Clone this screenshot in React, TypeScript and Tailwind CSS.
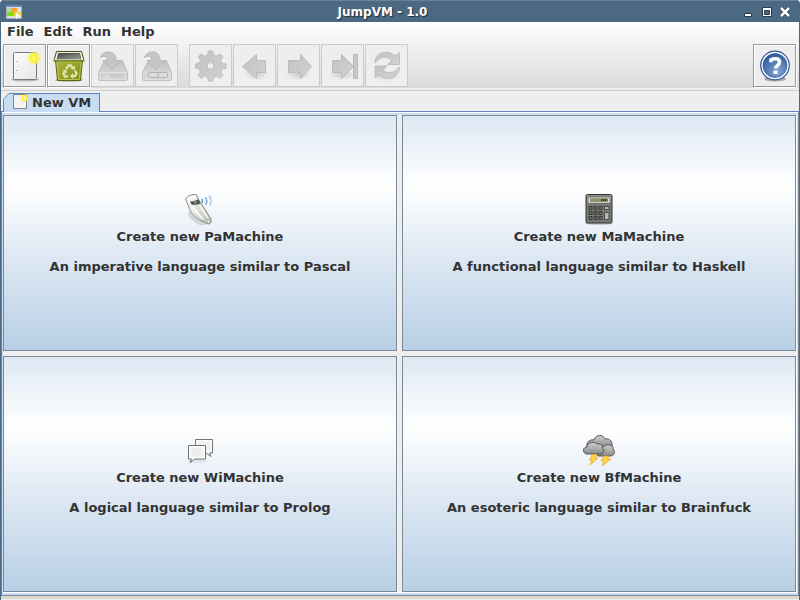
import React from "react";

type IconProps = { children: React.ReactNode; size?: string };

function Art({ children, size = "size-8" }: IconProps) {
  return (
    <svg viewBox="0 0 32 32" className={`${size} block shrink-0`} aria-hidden="true">
      {children}
    </svg>
  );
}

const NewIcon = () => (
  <Art>
    <defs>
      <linearGradient id="page" x1="0" y1="0" x2="1" y2="1">
        <stop offset="0" stopColor="#fdfdfd" />
        <stop offset="1" stopColor="#e6e6e6" />
      </linearGradient>
      <radialGradient id="glow">
        <stop offset="0" stopColor="#fffbb0" />
        <stop offset="0.4" stopColor="#fff12a" />
        <stop offset="0.75" stopColor="#fbf043" stopOpacity="0.75" />
        <stop offset="1" stopColor="#fff27a" stopOpacity="0" />
      </radialGradient>
    </defs>
    <ellipse cx="16" cy="29.500" rx="14" ry="2" fill="#000" opacity="0.22" />
    <rect x="4.500" y="2.500" width="23" height="27" rx="1" fill="url(#page)" stroke="#777" />
    <path d="M9.500 4v24" stroke="#ededed" />
    <path d="M7 11.500h1.500M7 20.500h1.500" stroke="#aaa" />
    <circle cx="25" cy="8" r="7" fill="url(#glow)" />
  </Art>
);

const TrashIcon = () => (
  <Art>
    <defs>
      <linearGradient id="bin" x1="0" y1="0" x2="1" y2="1">
        <stop offset="0" stopColor="#acb63c" />
        <stop offset="1" stopColor="#7e8f12" />
      </linearGradient>
      <linearGradient id="hole" x1="0" y1="0" x2="1" y2="1">
        <stop offset="0" stopColor="#4a4d49" />
        <stop offset="1" stopColor="#9a9d97" />
      </linearGradient>
    </defs>
    <ellipse cx="16" cy="30" rx="14" ry="1.800" fill="#000" opacity="0.25" />
    <path d="M2.500 10h27l-2 20.500h-23z" fill="url(#bin)" stroke="#58680d" />
    <path d="M4 12h24l-1.700 17.500h-20.600z" fill="none" stroke="#c5ce62" strokeWidth="0.800" />
    <path d="M3.500 1.500h25l2.500 9h-3l-1.500-7h-21l-1.500 7h-3z" fill="#f0f2e7" stroke="#404d16" />
    <path d="M5.500 3.500h21l1.500 6h-24z" fill="url(#hole)" />
    <path d="M1 10h30" stroke="#e3ead0" />
    <path d="M.5 11h31" stroke="#58680d" />
    <g fill="none" stroke="#dde4a8" strokeWidth="2.400">
      <path d="M13 19l2.500-3.500h2.500l1.500 2.500" />
      <path d="M22 20.500l1.500 3-1.500 2.500h-2.500" />
      <path d="M15 26.500h-3l-1.500-2.500 1-2" />
    </g>
    <g fill="#dde4a8">
      <path d="M22 15.500v4.500l-4.500-1z" />
      <path d="M20 23v6l-3-3z" />
      <path d="M9 20.500l4.500-1 .5 4z" />
    </g>
  </Art>
);

function SaveIcon({ as = false }: { as?: boolean }) {
  return (
    <Art>
      <defs>
        <linearGradient id="drive" x1="0" y1="0" x2="0" y2="1">
          <stop offset="0" stopColor="#c2c2c2" />
          <stop offset="1" stopColor="#dedede" />
        </linearGradient>
      </defs>
      <path d="M7.500 10.500h18l5 12v6.500q0 1.500-1.500 1.500H3q-1.500 0-1.500-1.500v-6.500z" fill="url(#drive)" stroke="#c0c0c0" />
      <path d="M2 22.500h28" stroke="#e0e0e0" />
      {as ? (
        <>
          <rect x="7.500" y="22.500" width="19" height="5" rx="1" fill="#dcdcdc" stroke="#b0b0b0" />
          <path d="M17 23.500v3" stroke="#a5a5a5" />
        </>
      ) : (
        <path d="M5 24v4M14 24v4M16 24v4M18 24v4M20 24v4M22 24v4M24 24v4M26 24v4" stroke="#c0c0c0" />
      )}
      <path d="M3.500 7.500C5 3 9 1.500 12.500 2c4.500.7 6.500 4 6.500 8.500h5l-9 9-9-9h4.500c0-4-3-5.500-7-3z" fill="#c6c6c6" stroke="#b6b6b6" />
    </Art>
  );
}

function GrayDefs() {
  return (
    <defs>
      <linearGradient id="gray" x1="0" y1="0" x2="1" y2="1">
        <stop offset="0" stopColor="#c2c2c2" />
        <stop offset="1" stopColor="#d2d2d2" />
      </linearGradient>
      <radialGradient id="shade">
        <stop offset="0" stopColor="#000" stopOpacity="0.14" />
        <stop offset="1" stopColor="#000" stopOpacity="0" />
      </radialGradient>
    </defs>
  );
}

const GearIcon = () => (
  <Art>
    <GrayDefs />
    <path
      fillRule="evenodd"
      d="M13.500 1h4l1 4 3 1.200 3.500-2.200 2.800 2.800-2.200 3.500 1.200 3 4.200.7v4l-4.200 1-1.200 3 2.200 3.500-2.800 2.800-3.500-2.200-3 1.200-1 3.700h-4l-1-3.700-3-1.200-3.500 2.200-2.800-2.800 2.200-3.500-1.200-3-3.700-1v-4l3.700-.7 1.200-3-2.200-3.500 2.800-2.800 3.500 2.200 3-1.200zM15.500 12.500a3.500 3.500 0 1 0 0 7 3.500 3.500 0 1 0 0-7z"
      fill="url(#gray)"
      stroke="#bcbcbc"
    />
  </Art>
);

const BackIcon = () => (
  <Art>
    <ellipse cx="17" cy="24" rx="13" ry="6" fill="url(#shade)" />
    <path d="M3.500 16.500L17.500 4.500v6h9v12h-9v6z" fill="url(#gray)" stroke="#bababa" />
  </Art>
);

const ForwardIcon = () => (
  <Art>
    <ellipse cx="15" cy="24" rx="13" ry="6" fill="url(#shade)" />
    <path d="M28.500 16.500L17.500 4.500v6h-12v12h12v6z" fill="url(#gray)" stroke="#bababa" />
  </Art>
);

const EndIcon = () => (
  <Art>
    <ellipse cx="15" cy="24" rx="13" ry="6" fill="url(#shade)" />
    <path d="M26.500 16.500L14.500 4.500v6h-9v12h9v6z" fill="url(#gray)" stroke="#bababa" />
    <path d="M26.500 4.500h4v24h-4z" fill="#c8c8c8" stroke="#b8b8b8" />
  </Art>
);

const RefreshIcon = () => (
  <Art>
    <ellipse cx="16" cy="26" rx="14" ry="5" fill="url(#shade)" />
    <path d="M4 13C3 4 16-2 24 6l4.500-3.500v12h-12l4-4C15 5 9 7 4 13z" fill="url(#gray)" stroke="#bfbfbf" />
    <path d="M28.500 17c0 10-13 15-20.500 8l-4 3V16h12l-4 4c5 5 11 3 16.500-3z" fill="url(#gray)" stroke="#bfbfbf" />
  </Art>
);

const HelpIcon = () => (
  <Art>
    <defs>
      <radialGradient id="help" cx="0.6" cy="0.75" r="0.7">
        <stop offset="0" stopColor="#83a7d4" />
        <stop offset="1" stopColor="#345f9e" />
      </radialGradient>
    </defs>
    <ellipse cx="16" cy="29" rx="11" ry="2.500" fill="#000" opacity="0.3" />
    <circle cx="16" cy="15.500" r="14.300" fill="#fff" stroke="#2f5796" strokeWidth="1.200" />
    <circle cx="16" cy="15.500" r="12" fill="url(#help)" stroke="#2f5796" strokeWidth="0.700" />
    <path d="M12 12.300V9.800C15 8 20.500 8.200 20.500 12c0 3.500-4 3.500-4 6.500" fill="none" stroke="#fff" strokeWidth="3.600" />
    <path d="M14.500 20.500h4v3.500h-4z" fill="#fff" />
  </Art>
);

const PhoneIcon = () => (
  <Art>
    <defs>
      <linearGradient id="phone" x1="0" y1="0" x2="1" y2="0.300">
        <stop offset="0" stopColor="#fff" />
        <stop offset="0.5" stopColor="#e6e6e2" />
        <stop offset="1" stopColor="#c2c3bd" />
      </linearGradient>
    </defs>
    <ellipse cx="13" cy="26" rx="11" ry="4" fill="#000" opacity="0.12" transform="rotate(35 13 26)" />
    <path d="M1.500 6C3 3 8 1 12.500 1.500l2 5L26.500 25c1.500 3 .5 6-2 6L20 29C14 27 8 22 6 17z" fill="url(#phone)" stroke="#8b8c85" />
    <path d="M4 7c3-2 5-3 8-3M8 14l11 12" fill="none" stroke="#fff" strokeWidth="1.500" />
    <path d="M16 13l8 12" stroke="#fafaf8" strokeWidth="1.500" />
    <circle cx="24.500" cy="28.500" r="1.300" fill="#fff" stroke="#999" strokeWidth="0.600" />
    <path d="M6.500 8.500c3 .5 5-.5 8-2l1.500 4c-3 1-6 1.500-8.500.5z" fill="#485046" stroke="#4b514a" strokeWidth="0.500" />
    <path d="M10 10l3-1" stroke="#8fa87c" strokeWidth="1.500" />
    <g fill="none" strokeWidth="1.500">
      <path d="M18 6q1 2 0 4" stroke="#5d92cb" />
      <path d="M21.500 4.500q2.500 3.500 0 7" stroke="#78a7d8" />
      <path d="M25 2.500q4 5 .5 10" stroke="#a7c9e8" />
    </g>
  </Art>
);

const CalculatorIcon = () => (
  <Art>
    <ellipse cx="16" cy="30.500" rx="14" ry="1.500" fill="#000" opacity="0.2" />
    <rect x="3" y="1.500" width="26" height="28.500" rx="1.500" fill="#777975" stroke="#30322f" />
    <path d="M4.500 10V3h23v7" fill="none" stroke="#aaa" />
    <rect x="5" y="4" width="22" height="6.500" rx="1.500" fill="#dcddd5" stroke="#444" strokeWidth="0.600" />
    <rect x="7" y="5.200" width="18" height="4" fill="#8b956b" />
    <path d="M18 7h6" stroke="#333b28" strokeDasharray="1.500 .5" strokeWidth="2" />
    {[13, 18, 23].map((y) =>
      [5.5, 10.5, 15.5].map((x) => (
        <g key={`${x}-${y}`}>
          <rect x={x} y={y} width="4" height="4" rx="1" fill="#383a37" />
          <path d={`M${x + 1} ${y + 2}h2`} stroke="#aaa" />
        </g>
      )),
    )}
    <rect x="21.500" y="13.500" width="4.500" height="3" fill="#b8b9b5" stroke="#4a4a4a" />
    <rect x="21.500" y="19.500" width="4.500" height="7" fill="#b8b9b5" stroke="#4a4a4a" />
  </Art>
);

const ChatIcon = () => (
  <Art>
    <ellipse cx="14" cy="27" rx="10" ry="2" fill="#000" opacity="0.06" />
    <path d="M11.500 5.500h17v13.500h-3l1.500 3.500-5-3.500h-10.500z" fill="#f0f0f0" stroke="#777" />
    <path d="M13 7h14v10H13z" fill="#eee" stroke="#fff" />
    <path d="M4.500 11.500h17v13.500H11l-5 3.500 1.500-3.500h-3z" fill="#f5f5f5" stroke="#707070" />
    <path d="M6 13h14v10.500H6z" fill="#eee" stroke="#fff" />
  </Art>
);

const StormIcon = () => (
  <Art>
    <defs>
      <linearGradient id="cloud" x1="0" y1="0" x2="0" y2="1">
        <stop offset="0" stopColor="#cfcfcf" />
        <stop offset="1" stopColor="#8a8a8a" />
      </linearGradient>
    </defs>
    <g fill="url(#cloud)" stroke="#4b4b4b" strokeWidth="0.900">
      <path d="M4 13c-1-5 3-8 7-7 2-6 9-6 11-1 5-1 8 3 7 8z" />
      <path d="M15 22c-2-5 1-9 5-9 4-4 11-2 10 2 3 3 1 7-3 7z" />
      <path d="M3 20C-1 18 0 13 4 13c0-5 8-6 10-3 4-1 7 2 5 4 3 1 2 6-1 6z" />
    </g>
    <g fill="#ffd641" stroke="#e7a12b" strokeWidth="0.700">
      <path d="M9 20.500h5l-1.500 3.500H15l-8 7 2-5H6.500z" />
      <path d="M21 22h5l-1.500 3H28l-9 7 2-5h-3z" />
    </g>
  </Art>
);

type ToolProps = { label: string; enabled?: boolean; children: React.ReactNode };

function Tool({ label, enabled = false, children }: ToolProps) {
  return (
    <button
      type="button"
      aria-label={label}
      disabled={!enabled}
      className={`flex size-[43px] items-center justify-center border bg-[#eee] ${
        enabled ? "border-[#999] shadow-[1px_1px_0_#fff,inset_1px_1px_0_#fff]" : "border-[#ccc]"
      }`}
    >
      {children}
    </button>
  );
}

const machines = [
  { title: "Create new PaMachine", text: "An imperative language similar to Pascal", icon: <PhoneIcon /> },
  { title: "Create new MaMachine", text: "A functional language similar to Haskell", icon: <CalculatorIcon /> },
  { title: "Create new WiMachine", text: "A logical language similar to Prolog", icon: <ChatIcon /> },
  { title: "Create new BfMachine", text: "An esoteric language similar to Brainfuck", icon: <StormIcon /> },
];

export default function App() {
  return (
    <div className="flex h-screen flex-col overflow-hidden rounded-t-[4px] bg-[#4c6983] font-['DejaVu_Sans',sans-serif] text-[13px] leading-[15px] font-bold text-[#333]">
      <header className="flex h-[22px] shrink-0 items-center border-t border-[#6a8298] pr-[9px] pl-[6px]">
        <svg viewBox="0 0 16 16" className="size-4" aria-hidden="true">
          <path d="M.5 1.500h15v13H.5z" fill="#ddd" stroke="#aaa" />
          <path d="M0 1h16v2H0z" fill="#6e87c0" />
          <path d="M1 4h4v4H1z" fill="#b9d99a" />
          <path d="M5 4h6v4H5z" fill="#ffa331" />
          <path d="M1 8h7v4H1z" fill="#7be01c" />
          <path d="M8 8h7v4H8z" fill="#f2d92f" />
          <path d="M10 8l5 4-5 3z" fill="#f4f4e8" />
        </svg>
        <h1 className="flex-1 pt-px text-center text-xs leading-[15px] text-white [text-shadow:1px_1px_1px_#1d2b38]">
          JumpVM - 1.0
        </h1>
        <div className="flex items-center gap-[6px]">
          <button type="button" aria-label="Minimize">
            <svg viewBox="0 0 12 12" className="block size-3">
              <path d="M1.500 7.500h7v3h-7z" fill="#fff" stroke="#2b3b4a" />
            </svg>
          </button>
          <button type="button" aria-label="Maximize">
            <svg viewBox="0 0 12 12" className="block size-3">
              <path d="M1.500 1.500h9v9h-9z" fill="#fff" stroke="#2b3b4a" />
              <path d="M3.500 4.500h5v4h-5z" fill="#4c6983" stroke="#2b3b4a" />
            </svg>
          </button>
          <button type="button" aria-label="Close">
            <svg viewBox="0 0 12 12" className="block size-3">
              <path d="M2 2l8 8M10 2l-8 8" stroke="#2b3b4a" strokeWidth="4" />
              <path d="M2 2l8 8M10 2l-8 8" stroke="#fff" strokeWidth="2.500" />
            </svg>
          </button>
        </div>
      </header>

      <div className="mx-px flex min-h-0 flex-1 flex-col bg-[#eee]">
        <div className="shrink-0 border-b border-[#ccc] bg-[#eee] pb-[2px]">
          <div className="bg-linear-to-b from-white to-[#dadada]">
            <nav className="flex h-[22px] items-start gap-[10px] px-[6px] pt-[2px]">
              <button type="button">File</button>
              <button type="button">Edit</button>
              <button type="button">Run</button>
              <button type="button">Help</button>
            </nav>
            <div className="flex gap-px pr-[3px] pb-px pl-[2px]">
              <Tool label="New" enabled><NewIcon /></Tool>
              <Tool label="Close" enabled><TrashIcon /></Tool>
              <Tool label="Save"><SaveIcon /></Tool>
              <Tool label="Save as"><SaveIcon as /></Tool>
              <div className="flex flex-1 gap-px pl-[10px]">
                <Tool label="Settings"><GearIcon /></Tool>
                <Tool label="Back"><BackIcon /></Tool>
                <Tool label="Forward"><ForwardIcon /></Tool>
                <Tool label="Run to end"><EndIcon /></Tool>
                <Tool label="Reset"><RefreshIcon /></Tool>
              </div>
              <Tool label="Help" enabled><HelpIcon /></Tool>
            </div>
          </div>
        </div>

        <div role="tablist" className="flex h-5 shrink-0 items-end pl-[2px]">
          <button
            type="button"
            role="tab"
            aria-selected="true"
            className="relative -mb-px flex h-[19px] items-start gap-1 border border-b-0 border-[#6382bf] bg-[#c8ddf2] pr-2 pl-2"
          >
            <svg viewBox="0 0 7 7" className="absolute -top-px -left-px size-[7px]" aria-hidden="true">
              <path d="M0 0h7L0 7z" fill="#eee" />
              <path d="M0 6.500L6.500 0" stroke="#6382bf" />
            </svg>
            <svg viewBox="0 0 16 16" className="size-4" aria-hidden="true">
              <path d="M1.500.500h13v14h-13z" fill="#f3f3f3" stroke="#858585" />
              <circle cx="12.500" cy="4" r="3.500" fill="#fff02c" opacity="0.9" />
              <circle cx="12.500" cy="4" r="1.300" fill="#fffbc0" />
            </svg>
            <span className="pt-px">New VM</span>
          </button>
        </div>

        <main className="flex min-h-0 flex-1 flex-col border border-[#6382bf] border-r-[#7a8a99] border-b-[#7a8a99] bg-[#c8ddf2] px-px pb-[2px]">
          <div className="-mx-px mb-[2px] h-px shrink-0 bg-white" />
          <div className="grid min-h-0 flex-1 grid-cols-2 grid-rows-2 gap-[5px] border-r border-b border-white bg-[#eee]">
            {machines.map((m) => (
              <button
                key={m.title}
                type="button"
                className="flex flex-col items-center justify-center gap-1 border border-[#7a8a99] bg-[linear-gradient(#dde8f3_0%,#fff_30%,#dde8f3_60%,#b8cfe5_100%)] pt-px"
              >
                {m.icon}
                <span className="flex flex-col gap-[15px]">
                  <span>{m.title}</span>
                  <span>{m.text}</span>
                </span>
              </button>
            ))}
          </div>
        </main>
        <div className="mb-px h-[3px] shrink-0 bg-[#dddad5]" />
      </div>
    </div>
  );
}
